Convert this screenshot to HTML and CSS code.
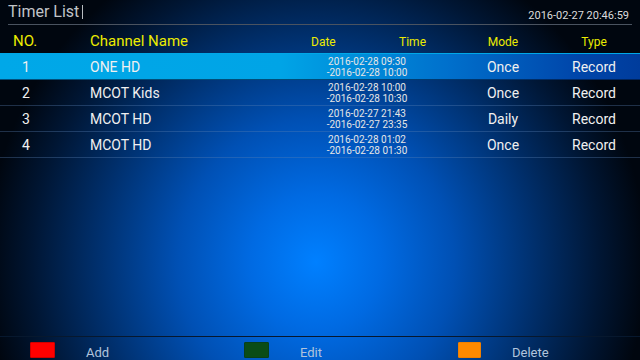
FILE: index.html
```html
<!DOCTYPE html>
<html lang="en">
<head>
    <meta charset="UTF-8">
    <meta name="viewport" content="width=device-width, initial-scale=1.0">
    <title>Timer List</title>
    <link rel="stylesheet" href="styles.css">
</head>
<body>
<div class="screen">
    <header class="topbar">
        <h1 class="title">Timer List<span class="cursor"></span></h1>
        <span class="clock">2016-02-27 20:46:59</span>
    </header>

    <div class="timer-table">
        <div class="row head">
            <span class="col-no">NO.</span>
            <span class="col-name">Channel Name</span>
            <span class="col-date"><span>Date</span><span class="time-label">Time</span></span>
            <span class="col-mode">Mode</span>
            <span class="col-type">Type</span>
        </div>
        <div class="row selected">
            <span class="col-no">1</span>
            <span class="col-name">ONE HD</span>
            <span class="col-date">2016-02-28 09:30<br>-2016-02-28 10:00</span>
            <span class="col-mode">Once</span>
            <span class="col-type">Record</span>
        </div>
        <div class="row">
            <span class="col-no">2</span>
            <span class="col-name">MCOT Kids</span>
            <span class="col-date">2016-02-28 10:00<br>-2016-02-28 10:30</span>
            <span class="col-mode">Once</span>
            <span class="col-type">Record</span>
        </div>
        <div class="row">
            <span class="col-no">3</span>
            <span class="col-name">MCOT HD</span>
            <span class="col-date">2016-02-27 21:43<br>-2016-02-27 23:35</span>
            <span class="col-mode">Daily</span>
            <span class="col-type">Record</span>
        </div>
        <div class="row">
            <span class="col-no">4</span>
            <span class="col-name">MCOT HD</span>
            <span class="col-date">2016-02-28 01:02<br>-2016-02-28 01:30</span>
            <span class="col-mode">Once</span>
            <span class="col-type">Record</span>
        </div>
    </div>

    <footer class="keys">
        <div class="key"><span class="swatch red"></span><span class="label">Add</span></div>
        <div class="key"><span class="swatch green"></span><span class="label">Edit</span></div>
        <div class="key"><span class="swatch orange"></span><span class="label">Delete</span></div>
    </footer>
</div>
</body>
</html>
```

FILE: styles.css
```css
body {
    margin: 0;
    padding: 0;
    font-family: Roboto, "Liberation Sans", sans-serif;
    background: #000;
    overflow: hidden;
}

.screen {
    width: 640px;
    height: 360px;
    display: flex;
    flex-direction: column;
    background: radial-gradient(ellipse 330px 340px at 316px 262px,
        #0080ff 0%, #006ae2 20%, #0050b4 42%, #00306e 66%, #001634 86%, #00060f 100%);
}

/* top bar */
.topbar {
    display: flex;
    justify-content: space-between;
    align-items: flex-start;
    height: 24px;
    margin: 0 8px;
    border-bottom: 1px solid #4a5360;
}

.title {
    margin: 0;
    padding-top: 3px;
    font-size: 16px;
    font-weight: normal;
    line-height: 18px;
    color: #c0c4c8;
}

.cursor {
    display: inline-block;
    width: 1px;
    height: 14px;
    margin-left: 3px;
    vertical-align: -2px;
    background: #b8bcc0;
}

.clock {
    padding-top: 9px;
    padding-right: 3px;
    font-size: 11px;
    line-height: 13px;
    color: #dcdcdc;
}

/* table */
.timer-table {
    flex: 1;
}

.row {
    display: grid;
    grid-template-columns: 90px 210px 134px 138px 44px 1fr;
    align-items: center;
    height: 26px;
    box-sizing: border-box;
    border-bottom: 1px solid rgba(90, 130, 180, 0.35);
    color: #f0f0f0;
    font-size: 14px;
}

.row .col-no {
    padding-left: 22px;
}

.row .col-mode, .row .col-type {
    justify-self: center;
    white-space: nowrap;
}

.row .col-date {
    text-align: center;
    font-size: 10px;
    line-height: 11px;
    color: #e6e6e6;
}

.row.head {
    height: 29px;
    padding-top: 7px;
    align-items: baseline;
    border-bottom: none;
    color: #ecec00;
    font-size: 12px;
    line-height: 18px;
}

.row.head .col-no {
    padding-left: 13px;
}

.row.head .col-no, .row.head .col-name {
    font-size: 15px;
}

.row.head .col-date {
    display: flex;
    padding-left: 11px;
    padding-right: 8px;
    font-size: 12px;
    line-height: 18px;
    color: #ecec00;
}

.time-label {
    margin-left: auto;
}

.row.selected {
    background: linear-gradient(to right, #00a8e8 0%, #00a4e6 44%, #0070cc 70%, #0046aa 90%, #003c9c 100%);
    border-top: 1px solid #00a8e8;
    margin-top: -1px;
    height: 27px;
    border-bottom-color: rgba(0, 20, 50, 0.6);
}

/* color keys */
.keys {
    display: grid;
    grid-template-columns: 214px 214px 1fr;
    height: 23px;
    padding-left: 30px;
    border-top: 1px solid #07182e;
}

.key {
    display: flex;
    align-items: flex-start;
    padding-top: 5px;
}

.swatch {
    width: 25px;
    height: 16px;
    margin-right: 31px;
    box-sizing: border-box;
    border-radius: 1px;
}

.swatch.red {
    background: #ff0000;
    border: 1px solid #d00000;
}

.swatch.green {
    background: #0a4c16;
    border: 1px solid #08401a;
}

.swatch.orange {
    width: 23px;
    background: #ff8a00;
    border: 1px solid #f08000;
}

.label {
    margin-top: 3px;
    font-size: 13px;
    line-height: 15px;
    color: #b0c4dc;
}
```
